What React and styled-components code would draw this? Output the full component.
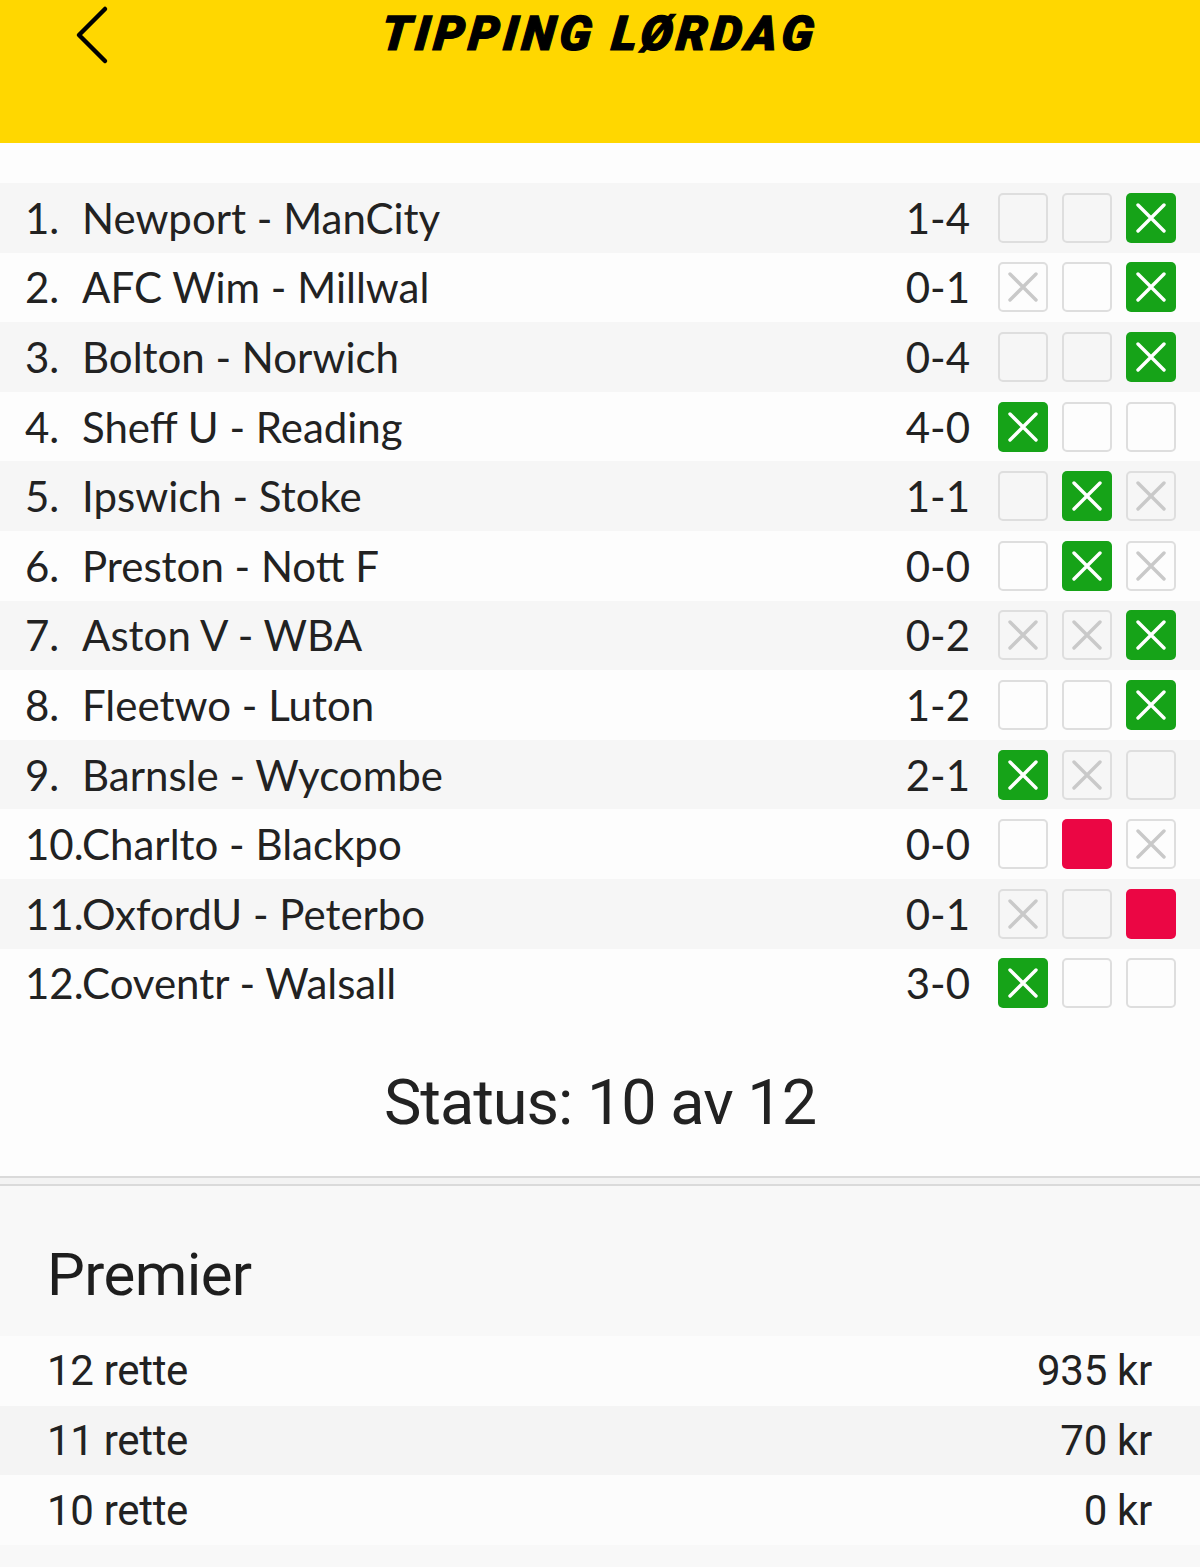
import React from 'react'
import styled, { createGlobalStyle } from 'styled-components'

const GlobalStyle = createGlobalStyle`
  html, body {
    margin: 0;
    padding: 0;
    background: #fdfdfd;
  }
  body {
    font-family: Lato, "Open Sans", sans-serif;
    color: #222;
  }
`;

const Page = styled.div`
  width: 1200px;
  min-height: 1567px;
  background: #f8f8f8;
`;

const Header = styled.header`
  height: 143px;
  background: #ffd700;
  display: grid;
  grid-template-columns: 1fr auto 1fr;
  align-items: start;
`;

const BackButton = styled.div`
  padding: 5px 0 0 74px;
  display: flex;
`;

const Title = styled.h1`
  margin: 0;
  padding-top: 4px;
  font-family: Roboto, "Liberation Sans", sans-serif;
  font-weight: 900;
  font-style: italic;
  font-size: 48px;
  line-height: 60px;
  letter-spacing: 4.5px;
  color: #000;
  -webkit-text-stroke: 1.2px #000;
  transform: skewX(-6deg);
`;

const Main = styled.div`
  background: #fdfdfd;
  padding-top: 40px;
`;

const Row = styled.div`
  height: 69.6px;
  display: flex;
  align-items: center;
  padding: 0 24px 0 25px;
  background: ${({ odd }) => (odd ? '#f6f6f6' : '#fdfdfd')};
  font-size: 42px;
  color: #222;
`;

const Num = styled.span`
  width: 57px;
  flex: none;
  white-space: nowrap;
`;

const Teams = styled.span`
  flex: 1;
  white-space: nowrap;
`;

const Score = styled.span`
  margin-right: 28px;
  text-align: right;
`;

const Boxes = styled.div`
  display: flex;
  gap: 14px;
`;

const Box = styled.div`
  width: 50px;
  height: 50px;
  box-sizing: border-box;
  border-radius: 5px;
  display: flex;
  align-items: center;
  justify-content: center;
  border: ${({ kind }) => (kind === 'green' || kind === 'red' ? 'none' : '2px solid #dedede')};
  background: ${({ kind }) =>
    kind === 'green' ? '#16a318' : kind === 'red' ? '#eb0644' : 'transparent'};
`;

const Status = styled.div`
  height: 158px;
  display: flex;
  align-items: center;
  justify-content: center;
  padding-top: 10px;
  box-sizing: border-box;
  font-family: Roboto, "Liberation Sans", sans-serif;
  font-size: 63px;
  letter-spacing: -1px;
  color: #222;
`;

const Divider = styled.div`
  height: 10px;
  box-sizing: border-box;
  border-top: 2px solid #dadada;
  border-bottom: 2px solid #dadada;
  background: #f3f3f3;
`;

const Prizes = styled.section`
  background: #f8f8f8;
  padding: 53px 0 22px;
  font-family: Roboto, "Liberation Sans", sans-serif;
`;

const PrizeTitle = styled.h2`
  margin: 0 0 25px;
  padding-left: 47px;
  font-size: 60px;
  line-height: 72px;
  font-weight: 400;
  letter-spacing: -0.6px;
  color: #1e1e1e;
`;

const PrizeRow = styled.div`
  height: 69.6px;
  display: flex;
  align-items: center;
  justify-content: space-between;
  padding: 0 48px 0 47px;
  font-size: 42px;
  letter-spacing: -0.3px;
  color: #222;
  background: ${({ odd }) => (odd ? '#f4f4f4' : '#fcfcfc')};
`;

const Cross = ({ color }) => (
  <svg width="30" height="30" viewBox="0 0 30 30">
    <path d="M2 2 L28 28 M28 2 L2 28" stroke={color} strokeWidth="3.4" strokeLinecap="round" />
  </svg>
)

const matches = [
  ['1.', 'Newport - ManCity', '1-4', ['', '', 'green']],
  ['2.', 'AFC Wim - Millwal', '0-1', ['x', '', 'green']],
  ['3.', 'Bolton - Norwich', '0-4', ['', '', 'green']],
  ['4.', 'Sheff U - Reading', '4-0', ['green', '', '']],
  ['5.', 'Ipswich - Stoke', '1-1', ['', 'green', 'x']],
  ['6.', 'Preston - Nott F', '0-0', ['', 'green', 'x']],
  ['7.', 'Aston V - WBA', '0-2', ['x', 'x', 'green']],
  ['8.', 'Fleetwo - Luton', '1-2', ['', '', 'green']],
  ['9.', 'Barnsle - Wycombe', '2-1', ['green', 'x', '']],
  ['10.', 'Charlto - Blackpo', '0-0', ['', 'red', 'x']],
  ['11.', 'OxfordU - Peterbo', '0-1', ['x', '', 'red']],
  ['12.', 'Coventr - Walsall', '3-0', ['green', '', '']],
]

const prizes = [
  ['12 rette', '935 kr'],
  ['11 rette', '70 kr'],
  ['10 rette', '0 kr'],
]

function App() {
  return (
    <Page>
      <GlobalStyle />
      <Header>
        <BackButton>
          <svg width="40" height="60" viewBox="0 0 40 60">
            <polyline points="31,4 5,30 31,56" fill="none" stroke="#000" strokeWidth="4.5" strokeLinecap="round" strokeLinejoin="round" />
          </svg>
        </BackButton>
        <Title>TIPPING LØRDAG</Title>
        <div />
      </Header>

      <Main>
        {matches.map(([num, teams, score, boxes], i) => (
          <Row key={num} odd={i % 2 === 0}>
            <Num>{num}</Num>
            <Teams>{teams}</Teams>
            <Score>{score}</Score>
            <Boxes>
              {boxes.map((kind, j) => (
                <Box key={j} kind={kind}>
                  {kind === 'green' && <Cross color="#fff" />}
                  {kind === 'x' && <Cross color="#c9c9c9" />}
                </Box>
              ))}
            </Boxes>
          </Row>
        ))}
        <Status>Status: 10 av 12</Status>
      </Main>

      <Divider />

      <Prizes>
        <PrizeTitle>Premier</PrizeTitle>
        {prizes.map(([label, amount], i) => (
          <PrizeRow key={label} odd={i % 2 === 1}>
            <span>{label}</span>
            <span>{amount}</span>
          </PrizeRow>
        ))}
      </Prizes>
    </Page>
  )
}

export default App
